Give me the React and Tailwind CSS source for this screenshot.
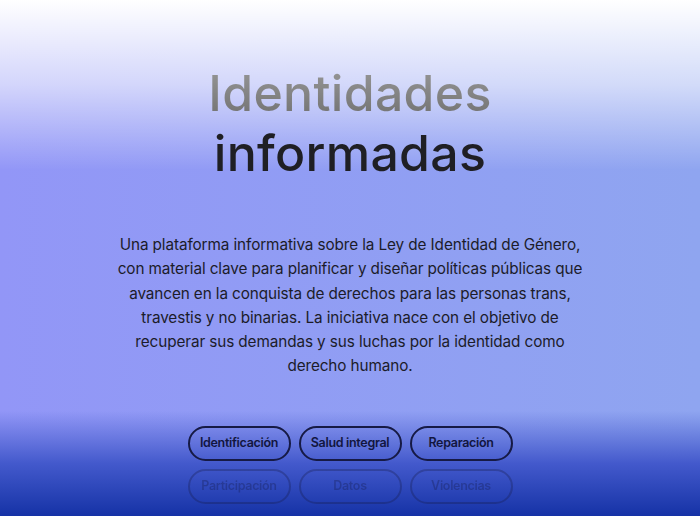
const topRow = ['Identificación', 'Salud integral', 'Reparación'];
const bottomRow = ['Participación', 'Datos', 'Violencias'];

const Pill = ({ label }) => (
  <button className="w-[103px] h-[35px] rounded-full border-2 border-[#161a45] text-[12.5px] font-semibold text-[#12163f] tracking-tight">
    {label}
  </button>
);

export default function App() {
  return (
    <div
      className="relative w-[700px] h-[516px] overflow-hidden bg-gradient-to-r from-[#9296f7] to-[#8fa5f0]"
      style={{ fontFamily: 'Inter, "Noto Sans", sans-serif' }}
    >
      {/* top white fade */}
      <div className="absolute inset-x-0 top-0 h-[170px] bg-gradient-to-b from-white via-white/60 to-transparent pointer-events-none" />
      {/* bottom deep blue fade */}
      <div className="absolute inset-x-0 bottom-0 h-[105px] bg-gradient-to-b from-transparent via-[#4359cc] to-[#1532a6] pointer-events-none" />

      <div className="relative flex flex-col items-center pt-[63px]">
        <h1 className="text-center text-[50px] font-medium leading-[60px] tracking-[0.3px]">
          <span className="block bg-gradient-to-b from-[#9a9a9a] to-[#6f6f6f] bg-clip-text text-transparent">
            Identidades
          </span>
          <span className="block text-[#1f1f24]">informadas</span>
        </h1>

        <p className="mt-[50px] w-[476px] text-center text-[15.3px] leading-[24.3px] tracking-[-0.1px] text-[#1c1c2a]">
          Una plataforma informativa sobre la Ley de Identidad de Género, con material clave para
          planificar y diseñar políticas públicas que avancen en la conquista de derechos para las
          personas trans, travestis y no binarias. La iniciativa nace con el objetivo de recuperar
          sus demandas y sus luchas por la identidad como derecho humano.
        </p>

        <div className="mt-[47px] flex flex-col gap-[8px]">
          <div className="flex gap-[8px]">
            {topRow.map((l) => (
              <Pill key={l} label={l} />
            ))}
          </div>
          <div className="flex gap-[8px] opacity-30">
            {bottomRow.map((l) => (
              <Pill key={l} label={l} />
            ))}
          </div>
        </div>
      </div>
    </div>
  );
}
